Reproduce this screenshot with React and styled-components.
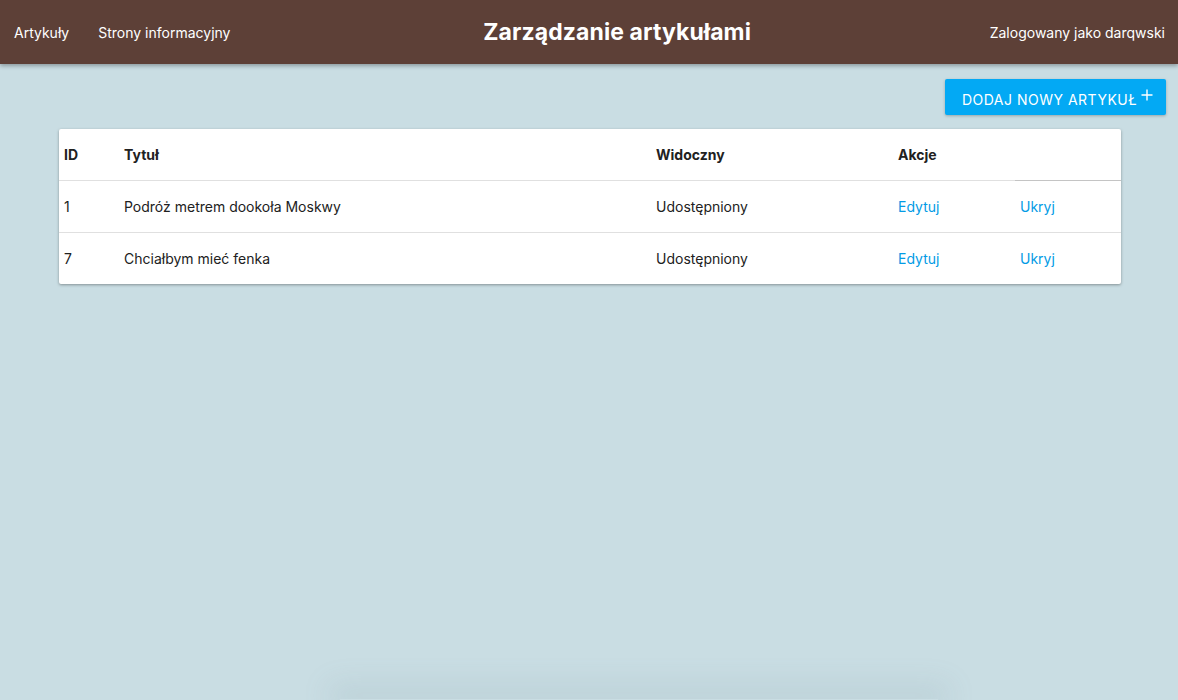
import React from "react"
import styled, { createGlobalStyle } from "styled-components"

const Global = createGlobalStyle`
  body {
    margin: 0;
    background: #c9dde3;
    font-family: Inter, "Noto Sans", sans-serif;
    overflow: hidden;
  }`;

const Page = styled.div`
  min-height: 700px;
  display: flex;
  flex-direction: column;`;

const Header = styled.header`
  height: 64px;
  background: #5d4037;
  color: #fff;
  display: flex;
  align-items: center;
  padding: 0 13px 0 14px;
  box-shadow: 0 2px 4px rgba(0, 0, 0, 0.3);
  position: relative;
  z-index: 1;`;

const Nav = styled.nav`
  display: flex;
  gap: 29px;
  font-size: 14px;`;

const Title = styled.h1`
  flex: 1;
  margin: 0;
  padding-left: 14px;
  text-align: center;
  font-size: 23px;
  font-weight: 700;
  letter-spacing: 0.1px;`;

const User = styled.div`
  font-size: 14px;`;

const Main = styled.main`
  padding: 15px 12px 0 59px;
  display: flex;
  flex-direction: column;`;

const Toolbar = styled.div`
  display: flex;
  justify-content: flex-end;
  margin-bottom: 14px;`;

const AddButton = styled.button`
  height: 36px;
  width: 221px;
  border: none;
  border-radius: 2px;
  background: #03a9f4;
  color: #fff;
  font-family: inherit;
  font-size: 14px;
  letter-spacing: 0.5px;
  text-transform: uppercase;
  display: flex;
  align-items: center;
  justify-content: center;
  gap: 4px;
  box-shadow: 0 1px 3px rgba(0, 0, 0, 0.25);
  padding: 4px 0 0 4px;
  svg { margin-top: -8px; }`;

const Card = styled.div`
  width: 1062px;
  background: #fff;
  border-radius: 2px;
  box-shadow: 0 1px 3px rgba(0, 0, 0, 0.35);`;

const Table = styled.table`
  width: 100%;
  border-collapse: collapse;
  table-layout: fixed;
  font-size: 14px;
  color: #212121;`;

const Th = styled.th`
  height: 51px;
  text-align: left;
  font-weight: 700;
  padding: 0 5px;
  border-bottom: 1px solid ${p => (p.$dark ? "#c4c4c4" : "#e0e0e0")};`;

const Td = styled.td`
  height: 51px;
  padding: 0 5px;
  border-bottom: ${p => (p.$last ? "none" : "1px solid #e0e0e0")};`;

const Link = styled.a`
  color: #039be5;
  cursor: pointer;`;

const BottomShade = styled.div`
  margin: auto 240px 0 340px;
  height: 1px;
  box-shadow: 0 -4px 28px 10px rgba(120, 150, 160, 0.18);`;

const articles = [
  { id: 1, title: "Podróż metrem dookoła Moskwy", visible: "Udostępniony" },
  { id: 7, title: "Chciałbym mieć fenka", visible: "Udostępniony" },
];

export default function App() {
  return (
    <Page>
      <Global />
      <Header>
        <Nav>
          <span>Artykuły</span>
          <span>Strony informacyjny</span>
        </Nav>
        <Title>Zarządzanie artykułami</Title>
        <User>Zalogowany jako darqwski</User>
      </Header>
      <Main>
        <Toolbar>
          <AddButton>
            Dodaj nowy artykuł
            <svg width="12" height="12" viewBox="0 0 12 12">
              <path d="M6 0.5v11M0.5 6h11" stroke="#fff" strokeWidth="1.4" />
            </svg>
          </AddButton>
        </Toolbar>
        <Card>
          <Table>
            <colgroup>
              <col style={{ width: 60 }} />
              <col style={{ width: 532 }} />
              <col style={{ width: 242 }} />
              <col style={{ width: 122 }} />
              <col style={{ width: 106 }} />
            </colgroup>
            <thead>
              <tr>
                <Th>ID</Th>
                <Th>Tytuł</Th>
                <Th>Widoczny</Th>
                <Th>Akcje</Th>
                <Th $dark />
              </tr>
            </thead>
            <tbody>
              {articles.map((a, i) => {
                const last = i === articles.length - 1;
                return (
                  <tr key={a.id}>
                    <Td $last={last}>{a.id}</Td>
                    <Td $last={last}>{a.title}</Td>
                    <Td $last={last}>{a.visible}</Td>
                    <Td $last={last}><Link>Edytuj</Link></Td>
                    <Td $last={last}><Link>Ukryj</Link></Td>
                  </tr>
                );
              })}
            </tbody>
          </Table>
        </Card>
      </Main>
      <BottomShade />
    </Page>
  )
}
